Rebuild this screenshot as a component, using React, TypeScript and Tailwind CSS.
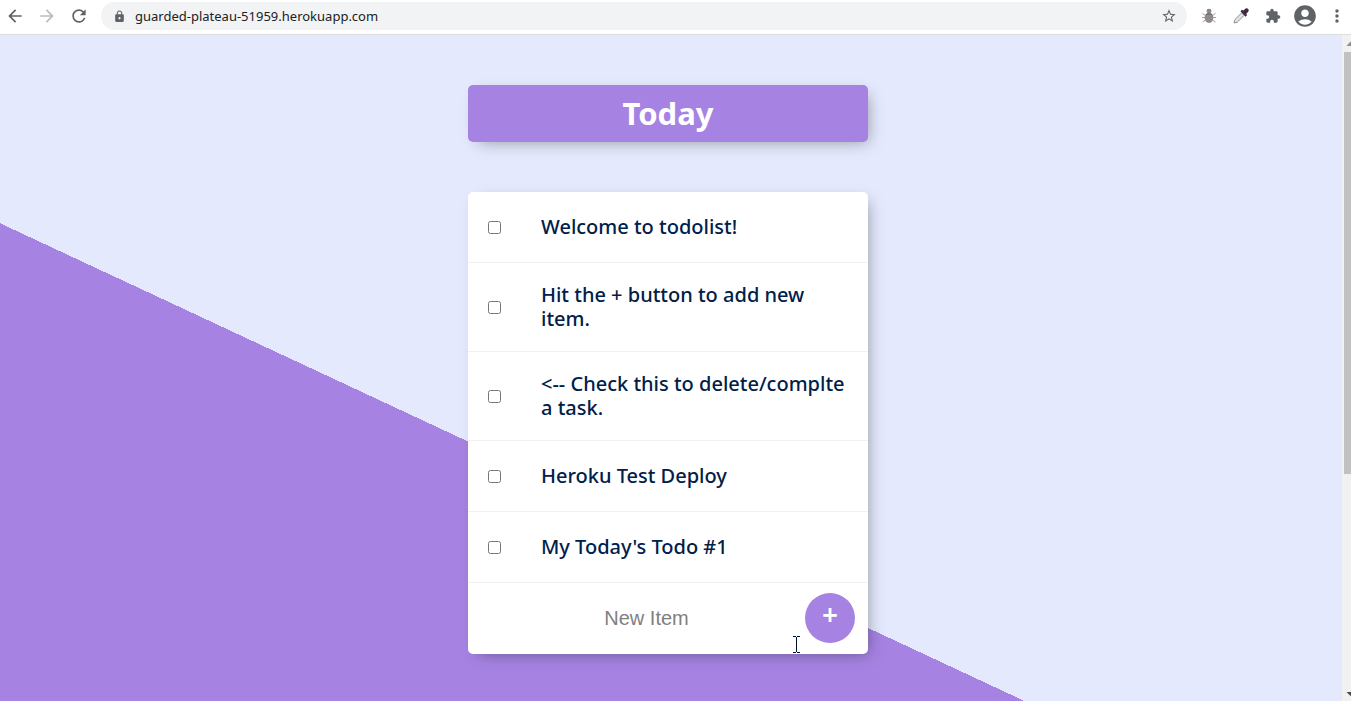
import { useState } from "react";
import {
  MdAccountCircle,
  MdArrowBack,
  MdArrowForward,
  MdExtension,
  MdLock,
  MdMoreVert,
  MdRefresh,
  MdStarBorder,
} from "react-icons/md";

const initialItems = [
  "Welcome to todolist!",
  "Hit the + button to add new item.",
  "<-- Check this to delete/complte a task.",
  "Heroku Test Deploy",
  "My Today's Todo #1",
];

function BugIcon() {
  return (
    <svg width="16" height="16" viewBox="0 0 16 16" aria-hidden="true">
      <g fill="none" stroke="#a5a3a2" strokeWidth="1">
        <path d="M4.500 7.500 1.500 5.500M11.500 7.500l3-2M4 9.500H1M12 9.500H15M4.500 12l-3 2M11.500 12l3 2" />
      </g>
      <ellipse cx="8" cy="3" rx="2.500" ry="2.200" fill="#8d8886" />
      <path d="M8 5c3.200 0 4.300 2 4.300 4.800S10.500 15 8 15s-4.300-2.400-4.300-5.200S4.800 5 8 5Z" fill="#928a88" />
      <path d="M5 6.500c2-.9 4-.9 6 0" stroke="#6c6462" strokeWidth="1" fill="none" />
    </svg>
  );
}

function DropperIcon() {
  return (
    <svg width="16" height="16" viewBox="0 0 16 16" aria-hidden="true">
      <path d="M9 4.500 1.800 11.700 1 15l3.300-.8L11.500 7Z" fill="#e0e4e4" stroke="#8e9292" strokeWidth="1" />
      <path d="m7.500 3.300 1.300-1.600 1.700.8L12 1c1-1 2.500-.8 3.200 0s.8 2.100-.2 3.100l-1.700 1.600.7 1.600-1.500 1.500Z" fill="#41283f" />
    </svg>
  );
}

function BrowserBar() {
  return (
    <header className="flex h-[35px] shrink-0 items-center border-b border-[#dadfe0] bg-white pb-0.5 text-[#5f6368]">
      <nav className="flex items-center gap-3 pl-[5px]">
        <button aria-label="Back"><MdArrowBack size={20} /></button>
        <button aria-label="Forward" className="text-[#babcbe]"><MdArrowForward size={20} /></button>
        <button aria-label="Reload"><MdRefresh size={20} /></button>
      </nav>
      <div className="ml-3 flex h-7 flex-1 items-center rounded-full bg-[#f1f3f4] pr-2.5 pl-3">
        <MdLock size={13} />
        <input
          aria-label="Address"
          defaultValue="guarded-plateau-51959.herokuapp.com"
          className="ml-[9px] flex-1 bg-transparent pt-px font-['Noto_Sans',sans-serif] text-[13px] text-[#202124] outline-none"
        />
        <button aria-label="Bookmark this page"><MdStarBorder size={16} /></button>
      </div>
      <div className="flex items-center gap-4 pr-1 pl-3.5">
        <button aria-label="Debugger"><BugIcon /></button>
        <button aria-label="Color picker"><DropperIcon /></button>
        <button aria-label="Extensions"><MdExtension size={16} /></button>
        <div className="-ml-[5px] flex items-center gap-[9px]">
          <button aria-label="Profile"><MdAccountCircle size={26} /></button>
          <button aria-label="Menu"><MdMoreVert size={20} /></button>
        </div>
      </div>
    </header>
  );
}

function ScrollRail() {
  return (
    <div className="flex w-[9px] shrink-0 flex-col overflow-hidden bg-[#f1f1f1]" aria-hidden="true">
      <svg className="h-[17px] w-[17px] shrink-0" viewBox="0 0 17 17">
        <path d="M4.500 11 8.500 6.500 12.500 11Z" fill="#8a8f9a" />
      </svg>
      <div className="ml-0.5 h-[422px] w-[13px] bg-[#c1c1c1]" />
      <svg className="mt-auto h-[17px] w-[17px] shrink-0" viewBox="0 0 17 17">
        <path d="M4.500 8H12.500L8.500 12Z" fill="#50465a" />
      </svg>
    </div>
  );
}

function Cursor() {
  return (
    <svg className="pointer-events-none absolute right-[67px] bottom-px h-[17px] w-[9px]" viewBox="0 0 9 17" aria-hidden="true">
      <path d="M1 .5h3M5 .5h3M4.500 1v15M1 16.500h3M5 16.500h3" stroke="#001030" fill="none" shapeRendering="crispEdges" />
    </svg>
  );
}

export default function App() {
  const [items, setItems] = useState(initialItems);
  const [draft, setDraft] = useState("");

  return (
    <div className="flex h-screen flex-col overflow-hidden">
      <BrowserBar />
      <div className="flex min-h-0 flex-1">
        <main className="flex flex-1 flex-col items-center overflow-hidden bg-[linear-gradient(25deg,#a683e3_433px,#e4e9fd_433px)] pt-[50px] pr-1.5 font-['Noto_Sans',sans-serif]">
          <div className="w-[400px] rounded-[5px] bg-[#a683e3] py-2 text-center shadow-[5px_5px_15px_-5px_rgba(0,0,0,0.35)]">
            <h1 className="text-[31px] leading-[41px] font-bold text-white">Today</h1>
          </div>
          <div className="relative mt-[50px] w-[400px] rounded-[5px] bg-white shadow-[5px_5px_15px_-5px_rgba(0,0,0,0.35)]">
            {items.map((item) => (
              <label key={item} className="flex min-h-[71px] items-center border-b border-[#f1f1f1] px-5 py-5">
                <input
                  type="checkbox"
                  className="size-[13px] shrink-0"
                  onChange={() => setItems(items.filter((other) => other !== item))}
                />
                <span className="ml-10 w-[307px] shrink-0 text-[20px] leading-6 font-medium text-[#00204a]">{item}</span>
              </label>
            ))}
            <form
              className="flex items-center pt-2.5 pr-[13px] pb-[11px] pl-5"
              onSubmit={(event) => {
                event.preventDefault();
                if (draft) setItems([...items, draft]);
                setDraft("");
              }}
            >
              <input
                aria-label="New Item"
                placeholder="New Item"
                value={draft}
                onChange={(event) => setDraft(event.target.value)}
                className="min-w-0 flex-1 text-center font-['Liberation_Sans',sans-serif] text-xl text-[#00204a] outline-none placeholder:text-[#808080]"
              />
              <button
                type="submit"
                className="size-[50px] rounded-full bg-[#a683e3] pb-2 text-[28px] leading-none font-semibold text-white"
              >
                +
              </button>
            </form>
            <Cursor />
          </div>
        </main>
        <ScrollRail />
      </div>
    </div>
  );
}
